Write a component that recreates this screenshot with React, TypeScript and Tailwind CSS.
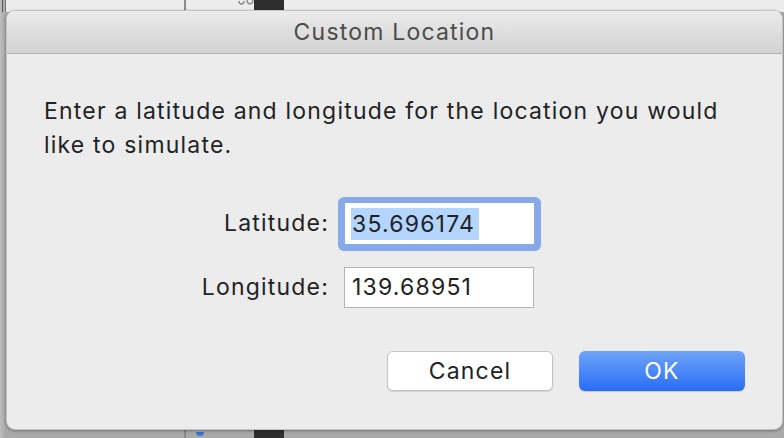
export default function App() {
  return (
    <div
      className="relative w-[784px] h-[438px] overflow-hidden bg-[#a9a9a9]"
      style={{ fontFamily: "Inter, 'Noto Sans', sans-serif" }}
    >
      {/* window behind the sheet */}
      <div className="absolute inset-x-0 top-0 h-[12px] bg-[#ececec]" />
      <div className="absolute left-0 top-0 h-full w-[6px] bg-gradient-to-r from-[#bdbdbd] to-[#a5a5a5]" />
      <div className="absolute left-[2px] top-0 h-[12px] w-[1px] bg-[#555]" />
      <div className="absolute left-[5px] top-0 h-[12px] w-[1px] bg-[#777]" />
      <div className="absolute left-[184px] top-0 h-full w-[2px] bg-[#8a8a8a]" />
      <div className="absolute left-[254px] top-0 h-full w-[30px] bg-[#2e2e2e]" />
      <svg className="absolute left-[238px] top-0" width="16" height="8" viewBox="0 0 16 8">
        <path d="M1 1 C1 5 6 5 6 1" fill="none" stroke="#8a8a8a" strokeWidth="1.4" />
        <path d="M9 0 C9 5 15 5 15 0" fill="none" stroke="#8a8a8a" strokeWidth="1.4" />
      </svg>
      <div className="absolute left-[196px] top-[432px] h-[4px] w-[8px] rounded-b-full bg-[#3b6fd8]" />

      {/* sheet */}
      <div className="absolute left-[6px] top-[10px] w-[777px] h-[420px] rounded-[9px] bg-[#ececec] shadow-[0_1px_3px_rgba(0,0,0,0.35)] flex flex-col overflow-hidden border border-[#c4c4c4] text-[23px] tracking-[1.2px]">
        <div className="h-[43px] shrink-0 flex items-center justify-center bg-gradient-to-b from-[#ebebeb] to-[#d2d2d2] border-b border-[#b3b3b3] text-[#4b4b4b]">
          Custom Location
        </div>

        <div className="flex-1 flex flex-col px-[37px] pt-[40px]">
          <p className="leading-[34px] text-[#232323]">
            Enter a latitude and longitude for the location you would
            <br />
            like to simulate.
          </p>

          <div className="mt-[41px] grid grid-cols-[285px_auto] grid-rows-[41px_41px] items-center gap-x-[16px] gap-y-[23px] text-[#232323]">
            <div className="text-right">Latitude:</div>
            <div className="w-[203px] h-[54px] rounded-[6px] bg-[#87a9ea] pt-[6px] pb-[7px] px-[7px] -ml-[7px] -mt-[6px] -mb-[7px] self-start">
              <div className="h-[41px] bg-white flex items-center pl-[6px]">
                <span className="bg-[#b4d5fe] leading-[32px] pl-[1px] pr-[4px]">35.696174</span>
              </div>
            </div>
            <div className="text-right">Longitude:</div>
            <div className="w-[190px] h-[41px] bg-white border border-[#b4b4b4] flex items-center pl-[7px] -ml-[1px]">
              139.68951
            </div>
          </div>

          <div className="mt-[43px] flex justify-end gap-[26px]">
            <button className="w-[166px] h-[40px] rounded-[6px] bg-white border border-[#c3c3c3] shadow-[0_1px_1px_rgba(0,0,0,0.12)] text-[#232323] tracking-[1.2px]">
              Cancel
            </button>
            <button className="w-[166px] h-[40px] rounded-[6px] bg-gradient-to-b from-[#6ea3f7] to-[#2a6cf6] shadow-[0_1px_1px_rgba(0,0,0,0.15)] text-white tracking-[1.2px]">
              OK
            </button>
          </div>
        </div>
      </div>
    </div>
  );
}
